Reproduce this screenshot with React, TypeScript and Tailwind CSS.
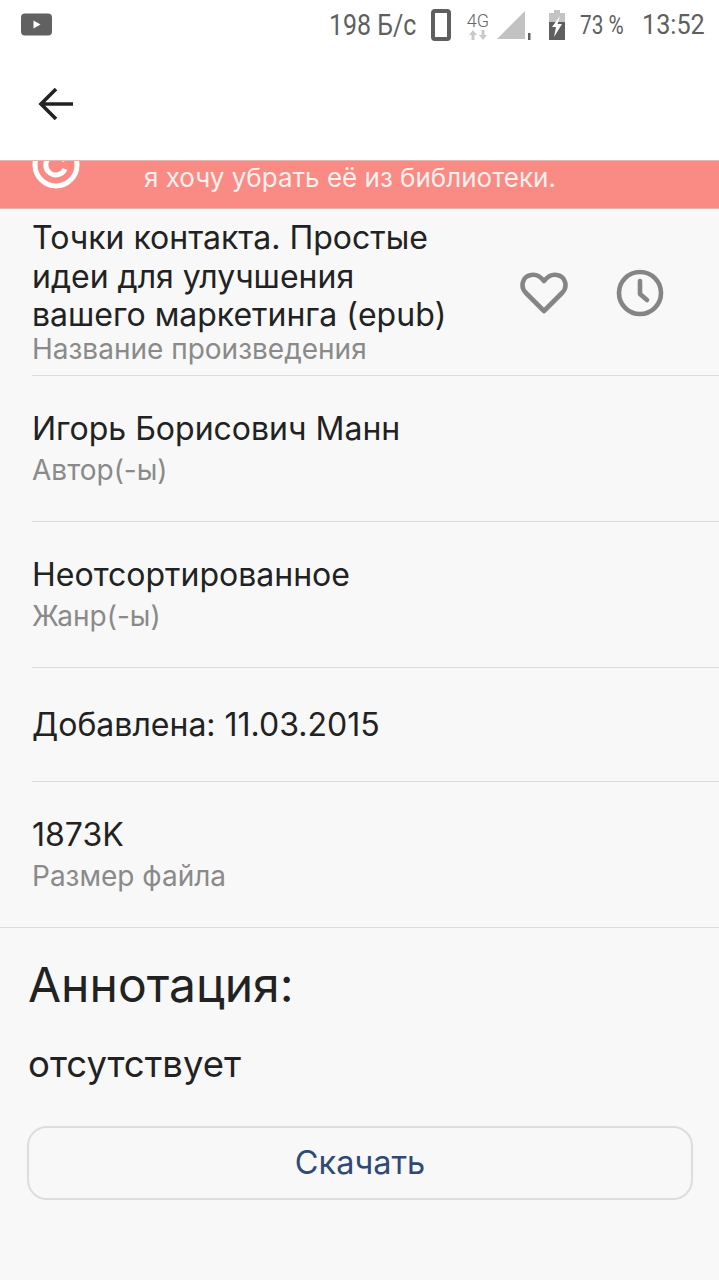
const font = "font-['Inter','Noto_Sans',sans-serif]";

function Row({ title, label, className }: { title: string; label?: string; className: string }) {
  return (
    <div className={`ml-8 border-b border-[#dcdcdc] ${className}`}>
      <div className="text-[32px] leading-[38px] text-[#222222]">{title}</div>
      {label ? <div className="mt-[5px] text-[28px] leading-[34px] text-[#8a8a8a]">{label}</div> : null}
    </div>
  );
}

function StatusBar() {
  return (
    <div className="flex h-[50px] items-center justify-between bg-white pl-[21px] pr-[15px] font-['Roboto',sans-serif] text-[#5f5f5f]">
      <svg width="31" height="23" viewBox="0 0 31 23" className="-mt-[2px]">
        <rect width="31" height="22" y="0.5" rx="4" fill="#616161" />
        <path d="M12.5 7.5 L19.5 11.5 L12.5 15.5 Z" fill="#fff" />
      </svg>
      <div className="flex items-center">
        <span className="w-[86px] origin-left scale-x-[0.86] whitespace-nowrap text-[29px] leading-none">198 Б/с</span>
        <svg width="20" height="32" viewBox="0 0 20 32" className="ml-[16px]">
          <rect x="2" y="2" width="16" height="28" rx="2" fill="none" stroke="#5f5f5f" stroke-width="4" />
        </svg>
        <div className="ml-[16px] flex w-[22px] flex-col items-center">
          <span className="text-[18px] font-light leading-[19px] text-[#666666]">4G</span>
          <svg width="20" height="10" viewBox="0 0 20 10">
            <path d="M5 0 L9 5 H6.5 V10 H3.5 V5 H1 Z M15 10 L11 5 H13.5 V0 H16.5 V5 H19 Z" fill="#c9c9c9" />
          </svg>
        </div>
        <svg width="37" height="30" viewBox="0 0 37 30" className="ml-[8px] mt-[2px]">
          <path d="M0 28 L28 0 V28 Z" fill="#c2c2c2" />
          <rect x="31" y="22" width="2.5" height="7" fill="#5f5f5f" />
        </svg>
        <svg width="16" height="30" viewBox="0 0 16 30" className="ml-[15px]">
          <path d="M5 0 H11 V3 H16 V12 H0 V3 H5 Z" fill="#c4c4c4" />
          <rect y="12" width="16" height="18" fill="#5f5f5f" />
          <path d="M11 6 L3 17 H7 L5 27 L13 14 H8.5 Z" fill="#fff" />
        </svg>
        <span className="ml-[15px] w-[44px] origin-left scale-x-[0.83] whitespace-nowrap text-[25px] leading-none">73 %</span>
        <span className="ml-[18px] w-[62px] origin-left scale-x-[0.9] whitespace-nowrap text-[28px] leading-none">13:52</span>
      </div>
    </div>
  );
}

export default function App() {
  return (
    <div className={`min-h-[1280px] w-[719px] overflow-hidden bg-[#f8f8f8] ${font}`}>
      <StatusBar />
      <div className="flex h-[110px] items-start bg-white pl-[38px] pt-[36px]">
        <svg width="36" height="36" viewBox="0 0 36 36" fill="none" stroke="#222222" stroke-width="3.6">
          <path d="M2 18 H35 M18 3 L3 18 L18 33" />
        </svg>
      </div>
      <div className="flex h-[49px] items-end overflow-hidden border-y border-[#e6b5b0] bg-[#f98a84] pl-[32px] pb-[14px]">
        <svg width="48" height="48" viewBox="0 0 48 48" fill="none" stroke="#fff" className="mb-[5px] shrink-0">
          <circle cx="24" cy="24" r="21" stroke-width="5" />
          <path d="M33 28 A 10 10 0 1 1 33 20" stroke-width="5" />
        </svg>
        <span className="ml-[64px] whitespace-nowrap text-[26px] leading-[32px] text-[#fdf0ee]">я хочу убрать её из библиотеки.</span>
      </div>
      <div className="ml-8 flex h-[167px] items-start justify-between border-b border-[#dcdcdc] pt-[10px]">
        <div className="w-[425px]">
          <div className="text-[32px] leading-[38.5px] text-[#222222]">
            Точки контакта. Простые идеи для улучшения вашего маркетинга (epub)
          </div>
          <div className="-mt-[2px] whitespace-nowrap text-[28px] leading-[32px] text-[#8a8a8a]">Название произведения</div>
        </div>
        <div className="mt-[50px] mr-[55px] flex items-center gap-[48px]">
          <svg width="48" height="42" viewBox="0 0 48 42" fill="none" stroke="#858585" stroke-width="4.6" stroke-linejoin="round">
            <path d="M24 39 L6 21 C0 15 2 4.5 11 3 C16 2 20 4 24 9 C28 4 32 2 37 3 C46 4.5 48 15 42 21 Z" />
          </svg>
          <svg width="48" height="48" viewBox="0 0 24 24" fill="none" stroke="#858585" stroke-width="2.3" stroke-linecap="round" stroke-linejoin="round">
            <circle cx="12" cy="12" r="10.5" />
            <path d="M12 6 V12.5 L15.5 15.5" />
          </svg>
        </div>
      </div>
      <Row title="Игорь Борисович Манн" label="Автор(-ы)" className="h-[146px] pt-[34px]" />
      <Row title="Неотсортированное" label="Жанр(-ы)" className="h-[146px] pt-[34px]" />
      <Row title="Добавлена: 11.03.2015" className="h-[114px] pt-[38px]" />
      <Row title="1873K" label="Размер файла" className="h-[145px] border-b-0 pt-[34px]" />
      <div className="border-t border-[#dcdcdc] px-[28px] pt-[29px]">
        <h2 className="text-[48px] leading-[56px] text-[#222222]">Аннотация:</h2>
        <p className="mt-[29px] text-[36.5px] leading-[44px] text-[#222222]">отсутствует</p>
        <button className="-ml-px mt-[40px] h-[74px] w-[666px] rounded-[20px] border-2 border-[#dddddd] text-[32.5px] text-[#2f4a75]">
          Скачать
        </button>
      </div>
    </div>
  );
}
